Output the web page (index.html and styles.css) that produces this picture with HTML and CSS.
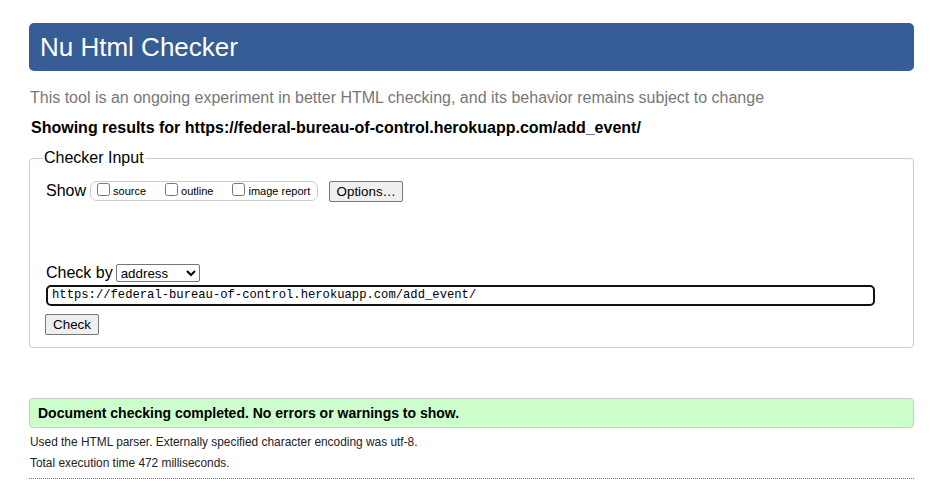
FILE: index.html
```html
<!DOCTYPE html>
<html lang="en">
<head>
<meta charset="utf-8">
<title>Nu Html Checker</title>
<link rel="stylesheet" href="styles.css">
</head>
<body>
<div class="page">
  <h1 class="title">Nu Html Checker</h1>
  <p class="intro">This tool is an ongoing experiment in better HTML checking, and its behavior remains subject to change</p>
  <p class="showing">Showing results for https://federal-bureau-of-control.herokuapp.com/add_event/</p>
  <fieldset class="checker">
    <legend class="legend">Checker Input</legend>
    <div class="show-row">
      <span class="show-label">Show</span>
      <span class="opts">
        <label class="opt"><input type="checkbox" class="cb"><span>source</span></label>
        <label class="opt"><input type="checkbox" class="cb"><span>outline</span></label>
        <label class="opt"><input type="checkbox" class="cb"><span>image report</span></label>
      </span>
      <button class="btn options">Options…</button>
    </div>
    <div class="checkby-row">
      <span class="checkby-label">Check by</span>
      <select class="sel"><option>address</option></select>
    </div>
    <div class="url-row"><span class="url">https://federal-bureau-of-control.herokuapp.com/add_event/</span></div>
    <div class="check-row"><button class="btn check">Check</button></div>
  </fieldset>
  <div class="success">Document checking completed. No errors or warnings to show.</div>
  <p class="meta">Used the HTML parser. Externally specified character encoding was utf-8.</p>
  <p class="meta">Total execution time 472 milliseconds.</p>
  <div class="rule"></div>
</div>
</body>
</html>
```
FILE: styles.css
```css
html, body { margin: 0; padding: 0; background: #fff; }
body { font-family: "Liberation Sans", Arial, sans-serif; color: #000; }
.page { padding: 23px 27px 0 29px; }
.title {
  margin: 0;
  height: 48px;
  box-sizing: border-box;
  background: #365d95;
  color: #fff;
  border-radius: 5px;
  font-weight: normal;
  font-size: 26px;
  line-height: 48px;
  padding-left: 11px;
}
.intro { margin: 18px 0 0 1px; font-size: 16px; line-height: 18px; color: #777; }
.showing { margin: 12px 0 0 2px; font-size: 16px; line-height: 18px; font-weight: bold; }
.checker {
  margin: 12px 0 0;
  padding: 8px 16px 12px;
  border: 1px solid #ccc;
  border-radius: 4px;
  min-width: 0;
}
.legend { padding: 0 1px; margin-left: -3px; font-size: 16px; line-height: 18px; }
.show-row { display: flex; align-items: center; height: 22px; margin-top: 5px; }
.show-label { font-size: 16px; margin-right: 4px; }
.opts {
  display: inline-flex; align-items: center;
  border: 1px solid #ccc; border-radius: 7px;
  height: 18px; padding: 0 7px 0 5px;
  gap: 18px;
}
.opt { display: inline-flex; align-items: center; font-size: 11px; }
.cb { margin: 0 3px 0 1px; width: 13px; height: 13px; position: relative; top: -2px; }
.btn {
  font-family: "Liberation Sans", Arial, sans-serif;
  font-size: 13.33px;
  background: #efefef;
  border: 1px solid #767676;
  border-radius: 2px;
  color: #000;
  padding: 1px 6px;
}
.options { margin-left: 11px; height: 21px; width: 74px; }
.checkby-row { display: flex; align-items: center; margin-top: 61px; height: 19px; }
.checkby-label { font-size: 16px; margin-right: 3px; }
.sel {
  font-family: "Liberation Sans", Arial, sans-serif;
  font-size: 13.33px;
  width: 84px; height: 18px;
  border: 1px solid #767676; border-radius: 2px;
  background: #fff; color: #000;
  padding: 0;
}
.url-row { margin-top: 3px; }
.url {
  display: block;
  box-sizing: border-box;
  width: 829px; height: 21px;
  border: 2px solid #111;
  border-radius: 5px;
  font-family: "Liberation Mono", "DejaVu Sans Mono", monospace;
  font-size: 12.2px;
  line-height: 17px;
  padding-left: 4px;
}
.check-row { margin-top: 8px; }
.check { height: 21px; width: 54px; margin-left: -1px; }
.success {
  margin-top: 50px;
  height: 30px;
  box-sizing: border-box;
  background: #ccffcc;
  border: 1px solid #ccc;
  border-radius: 4px;
  font-size: 14px;
  font-weight: bold;
  line-height: 28px;
  padding-left: 8px;
}
.meta { margin: 7px 0 0 1px; font-size: 11.9px; line-height: 14px; color: #222; }
.meta + .meta { margin-top: 7px; }
.rule { margin-top: 8px; border-top: 1px dotted #777; }
```
